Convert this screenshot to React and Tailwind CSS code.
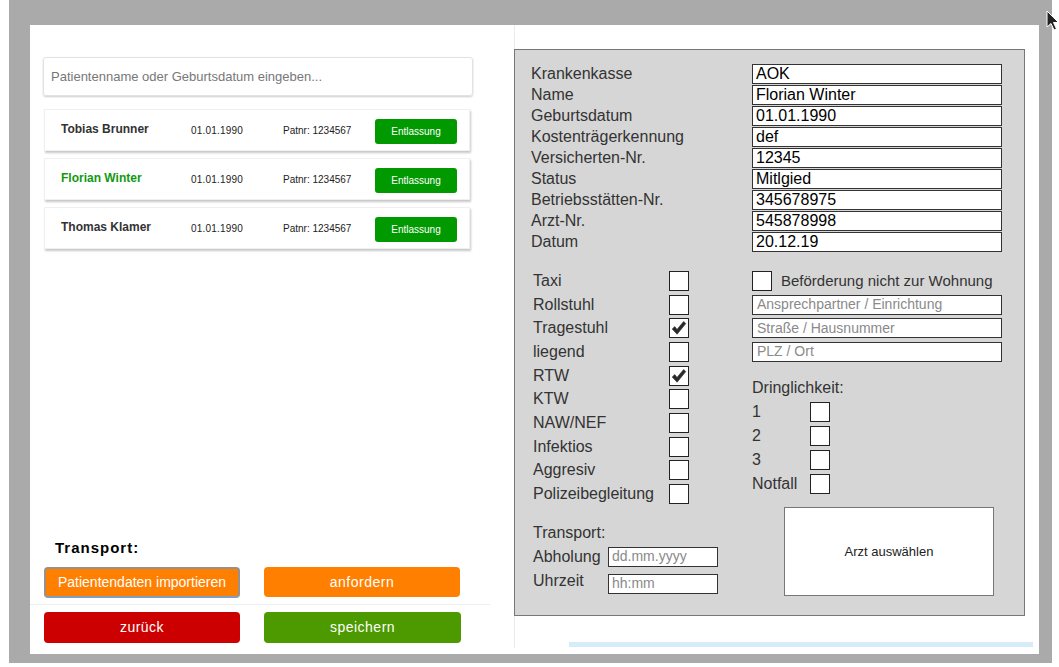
import React from 'react';

const patients = [
  { name: 'Tobias Brunner', active: false },
  { name: 'Florian Winter', active: true },
  { name: 'Thomas Klamer', active: false },
];

const fields = [
  ['Krankenkasse', 'AOK'],
  ['Name', 'Florian Winter'],
  ['Geburtsdatum', '01.01.1990'],
  ['Kostenträgerkennung', 'def'],
  ['Versicherten-Nr.', '12345'],
  ['Status', 'Mitlgied'],
  ['Betriebsstätten-Nr.', '345678975'],
  ['Arzt-Nr.', '545878998'],
  ['Datum', '20.12.19'],
];

const transportTypes = [
  ['Taxi', false],
  ['Rollstuhl', false],
  ['Tragestuhl', true],
  ['liegend', false],
  ['RTW', true],
  ['KTW', false],
  ['NAW/NEF', false],
  ['Infektios', false],
  ['Aggresiv', false],
  ['Polizeibegleitung', false],
];

function Box({ checked }) {
  return (
    <span className="w-[20px] h-[20px] shrink-0 bg-white border border-[#222] flex items-center justify-center">
      {checked && (
        <svg width="18" height="18" viewBox="0 0 18 18">
          <path d="M2.2 10 L4.8 7.6 L7 10.4 L13.6 2.6 L15.8 4.6 L7.1 15.2 Z" fill="#2a2a2a" strokeLinejoin="round" stroke="#2a2a2a" strokeWidth="0.6" />
        </svg>
      )}
    </span>
  );
}

function PatientCard({ name, active }) {
  return (
    <div className="h-[42px] w-[426px] mb-[7px] flex items-center bg-white border border-[#f0f0f0] shadow-[1px_2px_2px_rgba(0,0,0,0.22)]">
      <span className={`w-[146px] pl-[16px] text-[12px] font-bold -mt-[3px] ${active ? 'text-[#119911]' : 'text-[#333]'}`}>
        {name}
      </span>
      <span className="w-[92px] text-[10px] text-[#222] tracking-[0.2px]">01.01.1990</span>
      <span className="w-[92px] text-[10px] text-[#222]">Patnr: 1234567</span>
      <button className="w-[82px] h-[25px] mt-[3px] rounded-[3px] bg-[#009900] text-white text-[10px]">
        Entlassung
      </button>
    </div>
  );
}

export default function App() {
  return (
    <div className="w-[1059px] h-[667px] bg-white overflow-hidden relative font-['Liberation_Sans',Arial,sans-serif]">
      <div className="ml-[9px] w-[1043px] h-[663px] bg-[#aaaaaa] pt-[25px] pl-[21px]">
        <div className="w-[1009px] h-[629px] bg-white flex">
          {/* left: patient search + actions */}
          <div className="w-[484px] h-full flex flex-col">
            <div className="pt-[32px] pl-[13px]">
              <input
                className="w-[430px] h-[39px] px-[7px] text-[13px] text-[#333] placeholder:text-[#777] border border-[#e2e2e2] rounded-[3px] shadow-[0_1px_2px_rgba(0,0,0,0.2)] outline-none"
                placeholder="Patientenname oder Geburtsdatum eingeben..."
              />
              <div className="mt-[13px] ml-[1px]">
                {patients.map((p) => (
                  <PatientCard key={p.name} {...p} />
                ))}
              </div>
            </div>

            <div className="mt-auto pb-[11px]">
              <div className="pl-[25px] h-[18px] text-[15px] leading-[18px] font-bold tracking-[1px] text-black">Transport:</div>
              <div className="mt-[10px] pl-[14px] flex gap-[24px]">
                <button className="w-[196px] h-[31px] rounded-[4px] bg-[#ff8000] border-2 border-[#9b8f8a] border-b-[#7f9ec4] text-white text-[14px]">
                  Patientendaten importieren
                </button>
                <button className="w-[196px] h-[30px] rounded-[4px] bg-[#ff8000] text-white text-[14px] tracking-[0.5px]">
                  anfordern
                </button>
              </div>
              <div className="mt-[6px] h-px w-[460px] bg-[#efefef]" />
              <div className="mt-[7px] pl-[14px] flex gap-[24px]">
                <button className="w-[196px] h-[31px] rounded-[4px] bg-[#cc0000] text-white text-[14px] tracking-[0.5px]">
                  zurück
                </button>
                <button className="w-[197px] h-[31px] rounded-[4px] bg-[#4c9a00] text-white text-[14px] tracking-[0.5px]">
                  speichern
                </button>
              </div>
            </div>
          </div>

          {/* right: form */}
          <div className="w-[525px] h-[623px] border-l border-[#ebebeb] pt-[24px]">
            <div className="-ml-px w-[511px] h-[567px] bg-[#d6d6d6] border border-[#777] pt-[14px] text-[16px] text-[#333]">
              <div className="pl-[16px]">
                {fields.map(([label, value]) => (
                  <div key={label} className="h-[21px] flex items-start">
                    <span className="w-[221px] leading-[19px]">{label}</span>
                    <input
                      defaultValue={value}
                      className="w-[250px] h-[20px] bg-white border border-[#333] px-[3px] text-[16px] text-black outline-none"
                    />
                  </div>
                ))}
              </div>

              <div className="mt-[16px] pl-[18px] flex">
                <div className="w-[219px]">
                  {transportTypes.map(([label, checked]) => (
                    <div key={label} className="h-[23.7px] flex items-center">
                      <span className="w-[136px]">{label}</span>
                      <Box checked={checked} />
                    </div>
                  ))}
                  <div className="mt-[15px] h-[24px] flex items-center">Transport:</div>
                  <div className="h-[24px] flex items-center">
                    <span className="w-[75px]">Abholung</span>
                    <input
                      placeholder="dd.mm.yyyy"
                      className="w-[110px] h-[20px] bg-white border border-[#333] px-[3px] text-[14px] placeholder:text-[#8a8a8a] outline-none"
                    />
                  </div>
                  <div className="mt-[5px] h-[20px] flex items-start">
                    <span className="w-[75px] -mt-[3px] leading-[20px]">Uhrzeit</span>
                    <input
                      placeholder="hh:mm"
                      className="w-[110px] h-[20px] bg-white border border-[#333] px-[3px] text-[14px] placeholder:text-[#8a8a8a] outline-none"
                    />
                  </div>
                </div>

                <div className="flex flex-col">
                  <div className="h-[23.7px] flex items-center">
                    <Box />
                    <span className="ml-[9px] text-[15px]">Beförderung nicht zur Wohnung</span>
                  </div>
                  {['Ansprechpartner / Einrichtung', 'Straße / Hausnummer', 'PLZ / Ort'].map((ph) => (
                    <div key={ph} className="h-[23.7px] flex items-center">
                      <input
                        placeholder={ph}
                        className="w-[250px] h-[20px] bg-white border border-[#333] px-[4px] text-[14px] placeholder:text-[#8a8a8a] outline-none"
                      />
                    </div>
                  ))}
                  <div className="mt-[12px] h-[24px] flex items-center">Dringlichkeit:</div>
                  {['1', '2', '3', 'Notfall'].map((l) => (
                    <div key={l} className="h-[24px] flex items-center">
                      <span className="w-[58px]">{l}</span>
                      <Box />
                    </div>
                  ))}
                  <div className="mt-[11px] ml-[32px] w-[210px] h-[89px] bg-white border border-[#777] flex items-center justify-center text-[13px] text-[#222]">
                    Arzt auswählen
                  </div>
                </div>
              </div>
            </div>
            <div className="mt-[26px] ml-[54px] w-[464px] h-[5px] bg-[#d6ecf9]" />
          </div>
        </div>
      </div>

      {/* mouse pointer */}
      <svg className="absolute left-[1046px] top-[10px]" width="14" height="22" viewBox="0 0 14 22">
        <path d="M1 1 L1 17 L5 13.5 L8 20 L10.5 19 L7.5 12.5 L12.5 12.5 Z" fill="#222" stroke="#fff" strokeWidth="1" />
      </svg>
    </div>
  );
}
